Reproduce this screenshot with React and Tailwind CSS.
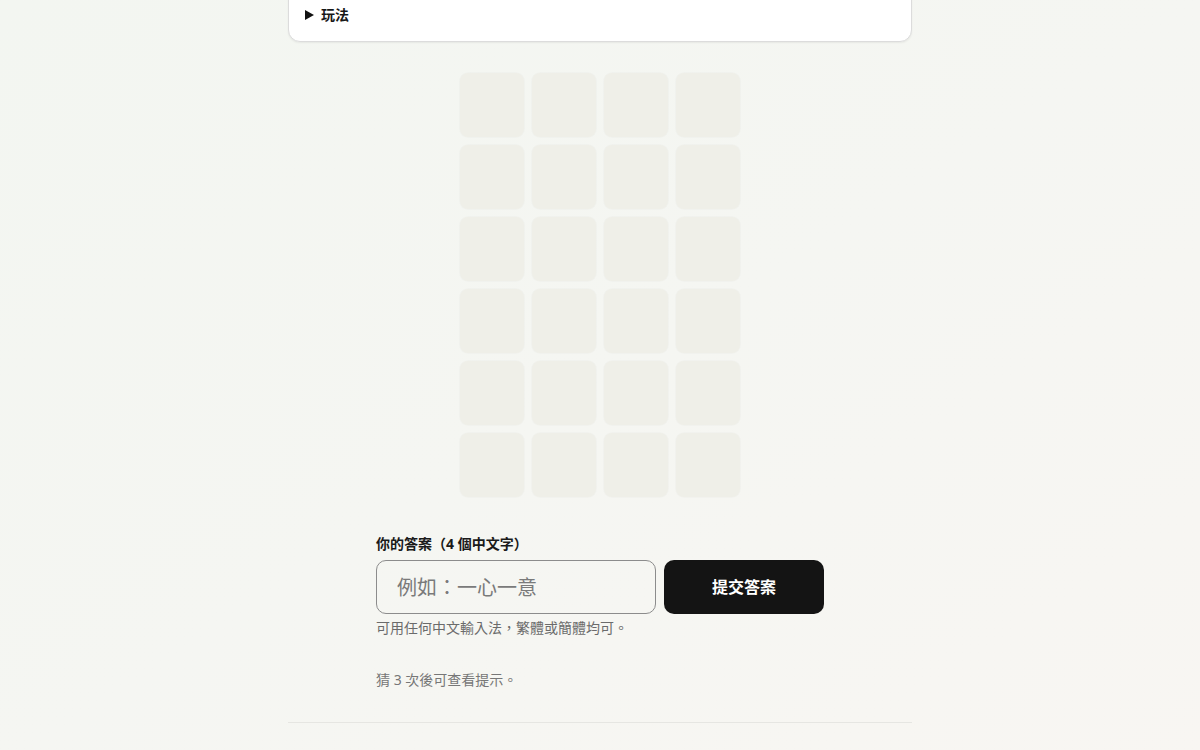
// App.jsx — 成語猜謎 • board view
const ROWS = 6;
const COLS = 4;

function Tile() {
  return <div className="w-16 h-16 rounded-lg bg-[#efefe8] shadow-[0_0_0_1px_rgba(0,0,0,0.015)]" />;
}

export default function App() {
  const cells = Array.from({ length: ROWS * COLS }, (_, i) => i);

  return (
    <div
      className="min-h-screen overflow-hidden bg-gradient-to-br from-[#f3f6f1] via-[#f5f6f2] to-[#f8f6f2] text-[#171717]"
      style={{ fontFamily: '"Noto Sans", "Noto Sans CJK TC", sans-serif' }}
    >
      <div className="w-[624px] mx-auto flex flex-col">
        {/* How-to-play card (top scrolled off) */}
        <div className="-mt-[17px] pt-[21px] pb-4 px-4 bg-white rounded-xl border border-[#dcdcdc] shadow-[0_1px_2px_rgba(0,0,0,0.06)]">
          <div className="flex items-center gap-[7px] text-sm leading-5 font-bold">
            <svg width="9" height="10" viewBox="0 0 9 10" className="shrink-0">
              <path d="M0 0 L9 5 L0 10 Z" fill="#111" />
            </svg>
            <span>玩法</span>
          </div>
        </div>

        {/* Board */}
        <div className="mt-[31px] mx-auto grid grid-cols-4 gap-2">
          {cells.map(i => <Tile key={i} />)}
        </div>

        {/* Answer form */}
        <div className="w-[448px] mx-auto mt-[37px]">
          <label className="block text-sm leading-5 font-bold text-[#1a1a1a]">你的答案（4 個中文字）</label>
          <div className="mt-1.5 flex gap-2">
            <input
              className="w-[280px] h-[54px] rounded-[10px] border border-[#8c8c8c] bg-transparent px-5 text-xl text-[#222] placeholder:text-[#7a7a7a] outline-none"
              placeholder="例如：一心一意"
            />
            <button className="w-40 h-[54px] rounded-[10px] bg-[#141414] text-white text-base font-bold">
              提交答案
            </button>
          </div>
          <p className="mt-1 text-sm leading-5 text-[#6b6b6b]">可用任何中文輸入法，繁體或簡體均可。</p>
          <p className="mt-8 text-sm leading-5 text-[#777]">猜 3 次後可查看提示。</p>
        </div>

        <div className="mt-8 border-t border-[#e6e6e2]" />
        <div className="h-10" />
      </div>
    </div>
  );
}
